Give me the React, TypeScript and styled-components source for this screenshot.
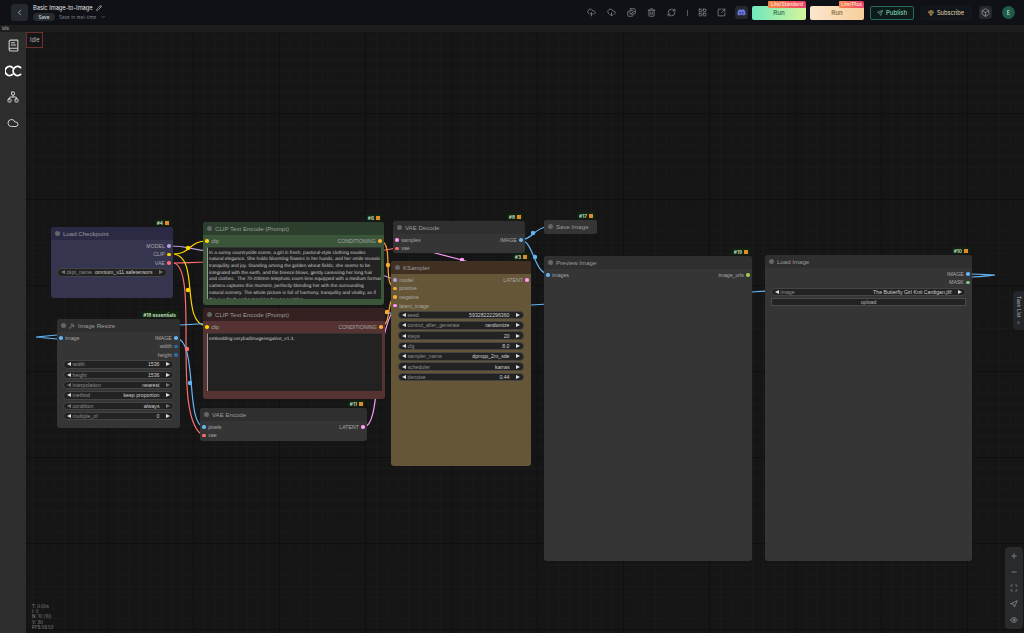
import React from "react";
import styled, { createGlobalStyle } from "styled-components";
import { CloudUpload, CloudDownload, Images, Trash2, RefreshCw, LayoutGrid, SquareArrowOutUpRight, Send, Box, BookText, Network, Cloud, Plus, Minus, Scan, Navigation, Eye, Pencil, ChevronDown, ChevronLeft, ChevronsUp, Gem, Hammer } from "lucide-react";
import { FaDiscord } from "react-icons/fa";

const Global = createGlobalStyle`
  html, body { margin: 0; padding: 0; background: #141414; overflow: hidden; }
  * { box-sizing: border-box; }
  #root { width: 1024px; height: 633px; font-family: "Inter", "Liberation Sans", sans-serif; }
`;

const Page = styled.div`
  width: 1024px;
  height: 633px;
  display: flex;
  flex-direction: column;
  color: #ddd;
`;

const TopBar = styled.header`
  height: 25px;
  flex: none;
  background: #0f1116;
  display: flex;
  align-items: center;
  padding: 0 9px 0 11px;
`;

const BackButton = styled.button`
  width: 17px;
  height: 17px;
  padding: 0;
  border: 0;
  border-radius: 3px;
  background: #23292f;
  color: #c8c8c8;
  display: flex;
  align-items: center;
  justify-content: center;
  margin-right: 5px;
`;

const TitleBlock = styled.div`
  display: flex;
  flex-direction: column;
  gap: 2px;
  flex: 1;
`;

const TitleRow = styled.div`
  display: flex;
  align-items: center;
  gap: 3px;
  font-size: 5.7px;
  color: #e4e4e4;
`;

const SaveRow = styled.div`
  display: flex;
  align-items: center;
  gap: 4px;
  font-size: 4.7px;
  color: #7c8288;
`;

const SavePill = styled.span`
  width: 22px;
  height: 8px;
  border-radius: 4px;
  background: #262c31;
  color: #cfcfcf;
  font-weight: 600;
  display: flex;
  align-items: center;
  justify-content: center;
`;

const ToolIcons = styled.div`
  display: flex;
  align-items: center;
  color: #8a8d90;
`;

const ToolSlot = styled.span<{ $w: number }>`
  width: ${(p) => p.$w}px;
  display: flex;
  justify-content: center;
`;

const Divider = styled.span`
  width: 1px;
  height: 6px;
  background: #55585c;
  margin: 0 9.5px 0 5.5px;
`;

const DiscordBox = styled.span`
  width: 13px;
  height: 13px;
  border-radius: 3px;
  background: #25262e;
  color: #6c78e6;
  display: flex;
  align-items: center;
  justify-content: center;
`;

const RunButton = styled.button<{ $plus?: boolean }>`
  position: relative;
  width: 54px;
  height: 14px;
  padding: 0;
  margin-left: 4px;
  border: 0;
  border-radius: 2px;
  font: 500 6.2px "Inter", sans-serif;
  color: ${(p) => (p.$plus ? "#7c5a36" : "#2d5c4c")};
  background: ${(p) =>
    p.$plus
      ? "linear-gradient(90deg, #fbe6cd, #f7cf9b)"
      : "linear-gradient(90deg, #6fe8bd, #d6f59a)"};
`;

const RunTag = styled.span<{ $w: number }>`
  position: absolute;
  top: -5px;
  right: 0;
  width: ${(p) => p.$w}px;
  height: 7px;
  border-radius: 1px 2px 1px 1px;
  background: linear-gradient(90deg, #f58a4a, #ee3f6e);
  color: #ffe7d4;
  font-size: 5px;
  line-height: 7px;
  text-align: center;
  white-space: nowrap;
`;

const PublishButton = styled.button`
  width: 44px;
  height: 14px;
  padding: 0;
  margin-left: 6px;
  border: 1px solid #2a6a58;
  border-radius: 2px;
  background: #0f1a1a;
  color: #7fd6b8;
  font: 500 6px "Inter", sans-serif;
  display: flex;
  align-items: center;
  justify-content: center;
  gap: 3px;
`;

const SubscribeButton = styled.button`
  width: 50px;
  height: 14px;
  padding: 0;
  margin-left: 7px;
  border: 1px solid #15191e;
  border-radius: 2px;
  background: #11151a;
  color: #d8c9a4;
  font: 500 5.6px "Inter", sans-serif;
  display: flex;
  align-items: center;
  justify-content: center;
  gap: 3px;
`;

const CubeBox = styled.span`
  width: 13px;
  height: 13px;
  margin-left: 8px;
  border-radius: 3px;
  background: #24272b;
  color: #9a9a9a;
  display: flex;
  align-items: center;
  justify-content: center;
`;

const Avatar = styled.span`
  width: 13px;
  height: 13px;
  margin-left: 10px;
  border-radius: 50%;
  background: #1f5a4a;
  color: #d6e6e0;
  font-size: 5.5px;
  display: flex;
  align-items: center;
  justify-content: center;
`;

const StatusStrip = styled.div`
  height: 7px;
  flex: none;
  background: #1d1d1d;
  color: #bbb;
  font-size: 4.2px;
  line-height: 7px;
  padding-left: 2px;
`;

const Body = styled.div`
  flex: 1;
  display: flex;
  min-height: 0;
`;

const Sidebar = styled.nav`
  width: 26px;
  flex: none;
  background: #2d2d2d;
  color: #cfcfcf;
  display: flex;
  flex-direction: column;
  align-items: center;
`;

const SideSlot = styled.span`
  height: 26px;
  display: flex;
  align-items: center;
  justify-content: center;
`;

const Canvas = styled.main`
  position: relative;
  flex: 1;
  overflow: hidden;
  background-color: #151515;
  background-image:
    linear-gradient(#0f0f0f 1px, transparent 1px),
    linear-gradient(90deg, #0f0f0f 1px, transparent 1px),
    linear-gradient(#191919 1px, transparent 1px),
    linear-gradient(90deg, #191919 1px, transparent 1px);
  background-size: 86px 86px, 86px 86px, 10.75px 10.75px, 10.75px 10.75px;
  background-position: -5px -5px;
`;

const Wires = styled.svg`
  position: absolute;
  left: 0;
  top: 0;
`;

const IdleBox = styled.div`
  position: absolute;
  left: 0;
  top: 0;
  width: 17px;
  height: 16px;
  border: 1px solid #6f2f2f;
  color: #b5b5b5;
  font-size: 5.6px;
  line-height: 14px;
  padding-left: 3px;
`;

const Stats = styled.div`
  position: absolute;
  left: 6px;
  top: 572px;
  color: #8c8c8c;
  font-size: 4.4px;
  line-height: 5.2px;
`;

const NodeBox = styled.section<{ $x: number; $y: number; $w: number; $h: number; $body: string }>`
  position: absolute;
  left: ${(p) => p.$x - 26}px;
  top: ${(p) => p.$y - 32}px;
  width: ${(p) => p.$w}px;
  height: ${(p) => p.$h}px;
  background: ${(p) => p.$body};
  border-radius: 3px;
  display: flex;
  flex-direction: column;
`;

const NodeTitle = styled.div<{ $bg: string }>`
  height: 13px;
  flex: none;
  background: ${(p) => p.$bg};
  border-radius: 3px 3px 0 0;
  display: flex;
  align-items: center;
  gap: 3px;
  padding-left: 4px;
  color: #9c9c9c;
  font: 400 6.1px "Liberation Sans", sans-serif;
  white-space: nowrap;
`;

const TitleDot = styled.span`
  width: 5px;
  height: 5px;
  border-radius: 50%;
  background: #666;
`;

const Badge = styled.div`
  position: absolute;
  right: 2px;
  top: -8px;
  height: 7px;
  padding: 0 2px;
  background: #10230f;
  color: #cfe0c8;
  font-size: 4.8px;
  font-weight: 600;
  display: flex;
  align-items: center;
  gap: 2px;
  white-space: nowrap;
`;

const BadgeMark = styled.span`
  width: 4px;
  height: 4px;
  background: #e08a2e;
`;

const NodeContent = styled.div`
  display: flex;
  flex-direction: column;
  padding: 1.6px 2px 0;
  min-height: 0;
  flex: 1;
`;

const PortRow = styled.div`
  height: 8.6px;
  flex: none;
  display: flex;
  align-items: center;
  justify-content: space-between;
  font: 400 5.2px "Liberation Sans", sans-serif;
  color: #a8a8a8;
`;

const Port = styled.span`
  display: flex;
  align-items: center;
  gap: 2.6px;
`;

const Dot = styled.span<{ $c: string }>`
  width: 3.6px;
  height: 3.6px;
  border-radius: 50%;
  background: ${(p) => p.$c};
`;

const WidgetList = styled.div<{ $inset: number }>`
  display: flex;
  flex-direction: column;
  gap: 1.85px;
  padding: 0.8px ${(p) => p.$inset}px 0;
`;

const Widget = styled.div`
  height: 8.5px;
  border-radius: 4.25px;
  border: 0.5px solid #444;
  background: #222;
  display: flex;
  align-items: center;
  gap: 1.5px;
  padding: 0 3px;
  font: 400 5.2px "Liberation Sans", sans-serif;
  color: #8f8f8f;
  white-space: nowrap;
`;

const WidgetValue = styled.span`
  margin-left: auto;
  margin-right: 5px;
  color: #cfcfcf;
`;

const Arrow = styled.span<{ $right?: boolean; $muted?: boolean }>`
  width: 0;
  height: 0;
  border-top: 2.2px solid transparent;
  border-bottom: 2.2px solid transparent;
  ${(p) =>
    p.$right
      ? `border-left: 4px solid ${p.$muted ? "#777" : "#ddd"};`
      : `border-right: 4px solid ${p.$muted ? "#777" : "#ddd"};`}
`;

const PromptBox = styled.div<{ $h: number }>`
  height: ${(p) => p.$h}px;
  margin: 2px 1px 0 2px;
  background: #222;
  border-left: 1px solid #9a9a9a;
  border-top: 0.5px solid #333;
  padding: 2.4px 0 0 1px;
  font: 400 4.75px/6.72px "Liberation Sans", sans-serif;
  text-rendering: geometricPrecision;
  color: #c8c8c8;
  overflow: hidden;
`;

const PromptLine = styled.div`
  white-space: pre;
`;

const UploadButton = styled.div`
  height: 8px;
  margin: 2px 4px 0;
  background: #222;
  border: 0.5px solid #4a4a4a;
  color: #b8b8b8;
  font: 400 5.2px/7px "Liberation Sans", sans-serif;
  text-align: center;
`;

const TaskTab = styled.div`
  position: absolute;
  right: 0;
  top: 259px;
  width: 11px;
  height: 39px;
  border-radius: 4px 0 0 4px;
  background: #22262a;
  color: #b8b8b8;
  font-size: 5.2px;
  writing-mode: vertical-rl;
  display: flex;
  align-items: center;
  justify-content: center;
  gap: 2px;
`;

const ZoomPanel = styled.div`
  position: absolute;
  right: 1px;
  top: 515px;
  width: 18px;
  height: 82px;
  border-radius: 4px;
  background: #292a2c;
  color: #9c9c9c;
  display: flex;
  flex-direction: column;
  align-items: center;
  justify-content: space-around;
  padding: 1px 0;
`;

type PortDef = { n: string; c: string };
type Row = { in?: PortDef; out?: PortDef };
type WidgetDef = [string, string, boolean?];

const BLUE = "#64b5f6";
const YEL = "#ffd500";
const RED = "#ff6e6e";
const ORA = "#ffa931";
const PUR = "#b39ddb";
const PNK = "#ff9cf9";
const GRN = "#81c784";

const WidgetRows = ({ items, inset }: { items: WidgetDef[]; inset: number }) => (
  <WidgetList $inset={inset}>
    {items.map(([label, value, muted]) => (
      <Widget key={label}>
        <Arrow $muted={muted} />
        <span>{label}</span>
        <WidgetValue>{value}</WidgetValue>
        <Arrow $right $muted={muted} />
      </Widget>
    ))}
  </WidgetList>
);

type NodeProps = {
  x: number; y: number; w: number; h: number;
  title: string; badge?: string; noMark?: boolean; tint?: string; head?: string;
  rows?: Row[]; children?: React.ReactNode; icon?: React.ReactNode;
};

const Node = ({ x, y, w, h, title, badge, noMark, tint = "#353535", head = "#2f2f2f", rows = [], children, icon }: NodeProps) => (
  <NodeBox $x={x} $y={y} $w={w} $h={h} $body={tint}>
    {badge && (
      <Badge>
        {badge}
        {!noMark && <BadgeMark />}
      </Badge>
    )}
    <NodeTitle $bg={head}>
      <TitleDot />
      {icon}
      {title}
    </NodeTitle>
    <NodeContent>
      {rows.map((r, i) => (
        <PortRow key={i}>
          <Port>{r.in && <><Dot $c={r.in.c} />{r.in.n}</>}</Port>
          <Port>{r.out && <>{r.out.n}<Dot $c={r.out.c} /></>}</Port>
        </PortRow>
      ))}
      {children}
    </NodeContent>
  </NodeBox>
);

const PROMPT = [
  "In a sunny countryside scene, a girl in fresh, pastoral-style clothing exudes",
  "natural elegance. She holds blooming flowers in her hands, and her smile reveals",
  "tranquility and joy. Standing among the golden wheat fields, she seems to be",
  "integrated with the earth, and the breeze blows, gently caressing her long hair",
  "and clothes.  The 70-200mm telephoto zoom lens equipped with a medium format",
  "camera captures this moment, perfectly blending her with the surrounding",
  "natural scenery. The whole picture is full of harmony, tranquility and vitality, as if",
  "this is a fresh and natural landscape painting.",
];

const wires: [string, string][] = [
  ["M170 246 C190 246 190 250 210 251 L385 276 L396 280", PUR],
  ["M174 263 C190 263 190 262 210 262 L385 250 L397 248", RED],
  ["M174 263 C200 270 170 420 204 436", RED],
  ["M174 254 C190 254 190 241 206 241", YEL],
  ["M174 254 C200 258 180 322 206 326", YEL],
  ["M176 338 C198 340 185 425 204 427", BLUE],
  ["M380 241 C395 241 381 288 396 288", ORA],
  ["M381 326 C392 326 386 297 396 297", ORA],
  ["M364 427 C382 425 372 340 396 305", PNK],
  ["M527 280 L462 260 L435 253 L397 240", PNK],
  ["M522 240 C534 238 534 228 547 227", BLUE],
  ["M522 240 C534 244 534 272 548 274", BLUE],
  ["M970 274 C985 274 985 275 995 275 C985 276 985 277 970 277 L752 292 L531 305 L180 325 L140 330 L57 335 L36 337 L57 339", BLUE],
];

const marks: [number, number, string][] = [
  [188, 248, YEL], [188, 290, YEL], [187, 349, RED], [190, 383, BLUE],
  [388, 265, ORA], [387, 312, ORA], [533, 233, BLUE], [535, 257, BLUE], [462, 260, PNK],
];

export default function App() {
  return (
    <Page>
      <Global />
      <TopBar>
        <BackButton><ChevronLeft size={9} /></BackButton>
        <TitleBlock>
          <TitleRow>Basic Image-to-Image <Pencil size={6} /></TitleRow>
          <SaveRow>
            <SavePill>Save</SavePill>
            Save in real-time <ChevronDown size={6} />
          </SaveRow>
        </TitleBlock>
        <ToolIcons>
          <ToolSlot $w={20}><CloudUpload size={9} /></ToolSlot>
          <ToolSlot $w={20}><CloudDownload size={9} /></ToolSlot>
          <ToolSlot $w={20}><Images size={9} /></ToolSlot>
          <ToolSlot $w={20}><Trash2 size={9} /></ToolSlot>
          <ToolSlot $w={20}><RefreshCw size={9} /></ToolSlot>
          <Divider />
          <ToolSlot $w={10}><LayoutGrid size={9} /></ToolSlot>
          <ToolSlot $w={28}><SquareArrowOutUpRight size={9} /></ToolSlot>
        </ToolIcons>
        <DiscordBox><FaDiscord size={9} /></DiscordBox>
        <RunButton>Run<RunTag $w={38}>Lite/Standard</RunTag></RunButton>
        <RunButton $plus>Run<RunTag $w={25}>Lite/Plus</RunTag></RunButton>
        <PublishButton><Send size={6} /> Publish</PublishButton>
        <SubscribeButton><Gem size={6} color="#f0c070" /> Subscribe</SubscribeButton>
        <CubeBox><Box size={9} /></CubeBox>
        <Avatar>E</Avatar>
      </TopBar>
      <StatusStrip>Idle</StatusStrip>
      <Body>
        <Sidebar>
          <SideSlot><BookText size={13} /></SideSlot>
          <SideSlot>
            <svg width="17" height="12" viewBox="0 0 17 12" fill="none" stroke="#fff" strokeWidth="1.8" strokeLinecap="round">
              <path d="M7.6 2.6 A4.5 4.5 0 1 0 7.6 9.4" />
              <path d="M15.6 2.6 A4.5 4.5 0 1 0 15.6 9.4" />
            </svg>
          </SideSlot>
          <SideSlot><Network size={12} /></SideSlot>
          <SideSlot><Cloud size={12} /></SideSlot>
        </Sidebar>
        <Canvas>
          <Wires width="998" height="601" viewBox="26 32 998 601" fill="none">
            {wires.map(([d, c], i) => (
              <path key={i} d={d} stroke={c} strokeWidth="1.2" />
            ))}
            {marks.map(([cx, cy, c], i) => (
              <circle key={i} cx={cx} cy={cy} r="2.2" fill={c} />
            ))}
          </Wires>

          <Node x={51} y={227} w={122} h={71} title="Load Checkpoint" badge="#4" tint="#353550" head="#2a2a45"
            rows={[{ out: { n: "MODEL", c: PUR } }, { out: { n: "CLIP", c: YEL } }, { out: { n: "VAE", c: RED } }]}>
            <WidgetRows inset={4} items={[["ckpt_name", "omnium_v11.safetensors", true]]} />
          </Node>

          <Node x={57} y={319} w={123} h={109} title="Image Resize" icon={<Hammer size={6} />} badge="#18 essentials" noMark
            rows={[{ in: { n: "image", c: BLUE }, out: { n: "IMAGE", c: BLUE } }, { out: { n: "width", c: "#2f6da8" } }, { out: { n: "height", c: "#2f6da8" } }]}>
            <WidgetRows inset={4} items={[
              ["width", "1536"], ["height", "1536"], ["interpolation", "nearest", true],
              ["method", "keep proportion"], ["condition", "always", true], ["multiple_of", "0"],
            ]} />
          </Node>

          <Node x={203} y={222} w={181} h={83} title="CLIP Text Encode (Prompt)" badge="#6" tint="#3a553a" head="#2c3f2c"
            rows={[{ in: { n: "clip", c: YEL }, out: { n: "CONDITIONING", c: ORA } }]}>
            <PromptBox $h={52}>
              {PROMPT.map((line) => (
                <PromptLine key={line}>{line}</PromptLine>
              ))}
            </PromptBox>
          </Node>

          <Node x={203} y={308} w={182} h={91} title="CLIP Text Encode (Prompt)" tint="#553333" head="#342020"
            rows={[{ in: { n: "clip", c: YEL }, out: { n: "CONDITIONING", c: ORA } }]}>
            <PromptBox $h={58}>embedding:verybadimagenegative_v1.3,</PromptBox>
          </Node>

          <Node x={200} y={408} w={167} h={33} title="VAE Encode" badge="#11"
            rows={[{ in: { n: "pixels", c: BLUE }, out: { n: "LATENT", c: PNK } }, { in: { n: "vae", c: RED } }]} />

          <Node x={393} y={221} w={132} h={32} title="VAE Decode" badge="#8"
            rows={[{ in: { n: "samples", c: PNK }, out: { n: "IMAGE", c: BLUE } }, { in: { n: "vae", c: RED } }]} />

          <Node x={391} y={261} w={140} h={205} title="KSampler" badge="#3" tint="#655638" head="#3f3022"
            rows={[
              { in: { n: "model", c: PUR }, out: { n: "LATENT", c: PNK } },
              { in: { n: "positive", c: ORA } }, { in: { n: "negative", c: ORA } }, { in: { n: "latent_image", c: PNK } },
            ]}>
            <WidgetRows inset={5} items={[
              ["seed", "59328222296360"], ["control_after_generate", "randomize", false], ["steps", "20"], ["cfg", "8.0"],
              ["sampler_name", "dpmpp_2m_sde"], ["scheduler", "karras"], ["denoise", "0.44"],
            ]} />
          </Node>

          <Node x={544} y={220} w={53} h={14} title="Save Image" badge="#17" tint="#353535" head="#353535" />

          <Node x={544} y={256} w={208} h={305} title="Preview Image" badge="#19"
            rows={[{ in: { n: "images", c: BLUE }, out: { n: "image_urls", c: "#9ccc4a" } }]} />

          <Node x={765} y={255} w={207} h={306} title="Load Image" badge="#10"
            rows={[{ out: { n: "IMAGE", c: BLUE } }, { out: { n: "MASK", c: GRN } }]}>
            <WidgetRows inset={4} items={[["image", "The Butterfly Girl Knit Cardigan.jfif"]]} />
            <UploadButton>upload</UploadButton>
          </Node>

          <IdleBox>Idle</IdleBox>
          <Stats>
            <div>T: 0.00s</div>
            <div>I: 0</div>
            <div>N: 10 [10]</div>
            <div>V: 30</div>
            <div>FPS:59.52</div>
          </Stats>
          <TaskTab>Task List <ChevronsUp size={5} /></TaskTab>
          <ZoomPanel>
            <Plus size={8} />
            <Minus size={8} />
            <Scan size={8} />
            <Navigation size={8} />
            <Eye size={8} />
          </ZoomPanel>
        </Canvas>
      </Body>
    </Page>
  );
}
